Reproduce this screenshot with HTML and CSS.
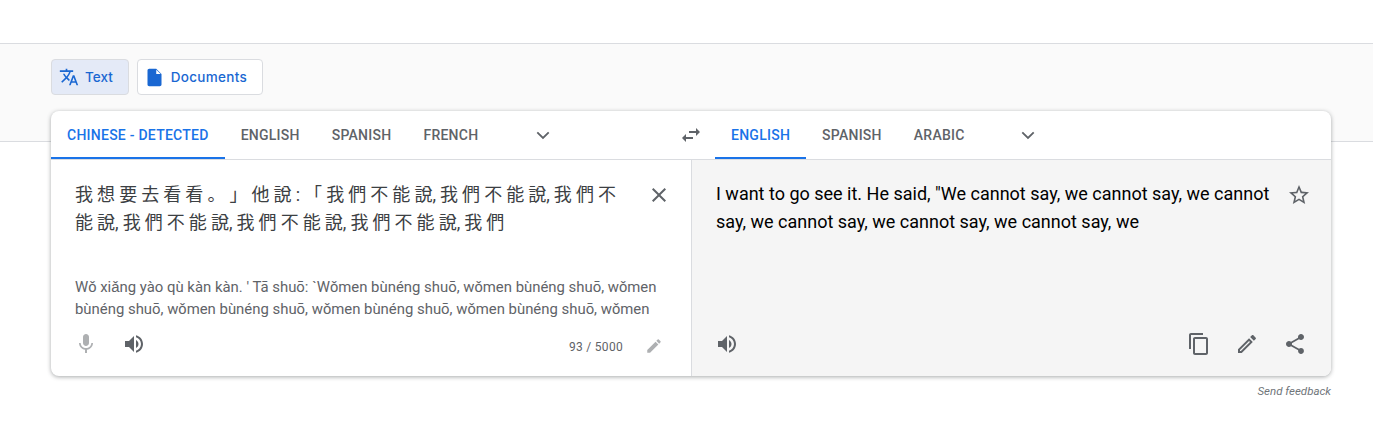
FILE: index.html
```html
<!DOCTYPE html>
<html lang="en">
<head>
  <meta charset="UTF-8" />
  <title>Google Translate</title>
  <link rel="stylesheet" href="styles.css">
</head>
<body>
  <svg class="defs" width="0" height="0">
    <symbol id="i-chevron" viewBox="0 0 24 24"><path d="M6.3 9.3L12 15l5.7-5.7" fill="none" stroke="#5f6368" stroke-width="1.8"/></symbol>
    <symbol id="i-volume" viewBox="0 0 24 24"><path d="M3 9v6h4l5 5V4L7 9H3zm13.5 3c0-1.77-1.02-3.29-2.5-4.03v8.05c1.48-.73 2.5-2.25 2.5-4.02zM14 3.23v2.06c2.89.86 5 3.54 5 6.71s-2.11 5.85-5 6.71v2.06c4.01-.91 7-4.49 7-8.77s-2.99-7.86-7-8.77z"/></symbol>
  </svg>

  <!-- top bar -->
  <header class="topbar"></header>

  <!-- mode buttons -->
  <div class="band">
    <button class="mode mode-active">
      <svg class="mode-icon" viewBox="0 0 24 24"><path d="M12.87 15.07l-2.54-2.51.03-.03c1.74-1.94 2.98-4.17 3.71-6.53H17V4h-7V2H8v2H1v1.99h11.17C11.5 7.92 10.44 9.75 9 11.35 8.07 10.32 7.3 9.19 6.69 8h-2c.73 1.63 1.73 3.17 2.98 4.56l-5.09 5.02L4 19l5-5 3.11 3.11.76-2.04zM18.5 10h-2L12 22h2l1.12-3h4.75L21 22h2l-4.5-12zm-2.62 7l1.62-4.33L19.12 17h-3.24z"/></svg>
      Text
    </button>
    <button class="mode mode-docs">
      <svg class="mode-icon doc-icon" viewBox="0 0 24 24"><path d="M6 2c-1.1 0-2 .9-2 2v16c0 1.1.9 2 2 2h12c1.1 0 2-.9 2-2V8l-6-6H6zm8 1v5h5z" fill-rule="evenodd"/></svg>
      Documents
    </button>
  </div>

  <!-- translator card -->
  <main class="card">
    <div class="lang-row">
      <div class="lang-bar lang-bar-src">
        <span class="tab tab-active">Chinese - detected</span>
        <span class="tab">English</span>
        <span class="tab">Spanish</span>
        <span class="tab">French</span>
        <svg class="chevron"><use href="#i-chevron"/></svg>
      </div>
      <div class="swap">
        <svg class="icon" viewBox="0 0 24 24"><path d="M6.99 11L3 15l3.99 4v-3H14v-2H6.99v-3zM21 9l-3.99-4v3H10v2h7.01v3L21 9z"/></svg>
      </div>
      <div class="lang-bar lang-bar-out">
        <span class="tab tab-active">English</span>
        <span class="tab">Spanish</span>
        <span class="tab">Arabic</span>
        <svg class="chevron"><use href="#i-chevron"/></svg>
      </div>
    </div>

    <div class="panels">
      <section class="panel panel-src">
        <div class="text-row">
          <p class="src-text">我 想 要 去 看 看 。 」 他 說 : 「 我 們 不 能 說, 我 們 不 能 說, 我 們 不 能 說, 我 們 不 能 說, 我 們 不 能 說, 我 們 不 能 說, 我 們</p>
          <svg class="icon close" viewBox="0 0 24 24"><path d="M19 6.41L17.59 5 12 10.59 6.41 5 5 6.41 10.59 12 5 17.59 6.41 19 12 13.41 17.59 19 19 17.59 13.41 12z"/></svg>
        </div>
        <p class="roman">Wǒ xiǎng yào qù kàn kàn. ' Tā shuō: `Wǒmen bùnéng shuō, wǒmen bùnéng shuō, wǒmen bùnéng shuō, wǒmen bùnéng shuō, wǒmen bùnéng shuō, wǒmen bùnéng shuō, wǒmen</p>
        <div class="tools">
          <svg class="icon faded" viewBox="0 0 24 24"><path d="M12 14c1.66 0 3-1.34 3-3V5c0-1.66-1.34-3-3-3S9 3.34 9 5v6c0 1.66 1.34 3 3 3zm5.3-3c0 3-2.54 5.1-5.3 5.1S6.7 14 6.7 11H5c0 3.41 2.72 6.23 6 6.72V21h2v-3.28c3.28-.48 6-3.3 6-6.72h-1.7z"/></svg>
          <svg class="icon"><use href="#i-volume"/></svg>
          <span class="count">93 / 5000</span>
          <svg class="icon-sm faded" viewBox="0 0 24 24"><path d="M3 17.25V21h3.75L17.81 9.94l-3.75-3.75L3 17.25zM20.71 7.04c.39-.39.39-1.02 0-1.41l-2.34-2.34c-.39-.39-1.02-.39-1.41 0l-1.83 1.83 3.75 3.75 1.83-1.83z"/></svg>
        </div>
      </section>

      <section class="panel panel-out">
        <div class="text-row text-row-out">
          <p class="out-text">I want to go see it. He said, "We cannot say, we cannot say, we cannot say, we cannot say, we cannot say, we cannot say, we</p>
          <svg class="icon star" viewBox="0 0 24 24"><path d="M22 9.24l-7.19-.62L12 2 9.19 8.63 2 9.24l5.46 4.73L5.82 21 12 17.27 18.18 21l-1.63-7.03L22 9.24zM12 15.4l-3.76 2.27 1-4.28-3.32-2.88 4.38-.38L12 6.1l1.71 4.04 4.38.38-3.32 2.88 1 4.28L12 15.4z"/></svg>
        </div>
        <div class="tools tools-out">
          <svg class="icon"><use href="#i-volume"/></svg>
          <svg class="icon push" viewBox="0 0 24 24"><path d="M16 1H4c-1.1 0-2 .9-2 2v14h2V3h12V1zm3 4H8c-1.1 0-2 .9-2 2v14c0 1.1.9 2 2 2h11c1.1 0 2-.9 2-2V7c0-1.1-.9-2-2-2zm0 16H8V7h11v14z"/></svg>
          <svg class="icon" viewBox="0 0 24 24"><path d="M14.06 9.02l.92.92L5.92 19H5v-.92l9.06-9.06M17.66 3c-.25 0-.51.1-.7.29l-1.83 1.83 3.75 3.75 1.83-1.83c.39-.39.39-1.02 0-1.41l-2.34-2.34c-.2-.2-.45-.29-.71-.29zm-3.6 3.19L3 17.25V21h3.75L17.81 9.94l-3.75-3.75z"/></svg>
          <svg class="icon" viewBox="0 0 24 24"><path d="M18 16.08c-.76 0-1.44.3-1.96.77L8.91 12.7c.05-.23.09-.46.09-.7s-.04-.47-.09-.7l7.05-4.11c.54.5 1.25.81 2.04.81 1.66 0 3-1.34 3-3s-1.34-3-3-3-3 1.34-3 3c0 .24.04.47.09.7L8.04 9.81C7.5 9.31 6.79 9 6 9c-1.66 0-3 1.34-3 3s1.34 3 3 3c.79 0 1.5-.31 2.04-.81l7.12 4.16c-.05.21-.08.43-.08.65 0 1.61 1.31 2.92 2.92 2.92 1.61 0 2.92-1.31 2.92-2.92s-1.31-2.92-2.92-2.92z"/></svg>
        </div>
      </section>
    </div>
  </main>

  <div class="feedback">Send feedback</div>
</body>
</html>
```

FILE: styles.css
```css
*{margin:0;padding:0;box-sizing:border-box;}

body{
  background:#fff;
  font-family:Roboto,Arial,sans-serif;
  color:#3c4043;
}
.defs{display:block;height:0;}

/* top + grey band */
.topbar{height:43px;}
.band{
  height:99px;
  padding:15px 51px 0;
  display:flex;
  align-items:flex-start;
  gap:8px;
  background:#fafafa;
  border-top:1px solid #dadce0;
  border-bottom:1px solid #dadce0;
}
.mode{
  height:36px;
  padding:0 15px 0 7px;
  display:flex;
  align-items:center;
  gap:6px;
  border:1px solid #dadce0;
  border-radius:4px;
  background:#fff;
  color:#1967d2;
  font-family:Inter,Roboto,sans-serif;
  font-size:13.5px;
  font-weight:500;
}
.mode-active{background:#e4eaf7;}
.mode-docs{padding:0 15px 0 6px;letter-spacing:.3px;}
.mode-icon{width:20px;height:20px;fill:#1967d2;}
.doc-icon{width:21px;height:21px;}

/* card */
.card{
  width:1280px;
  height:265px;
  margin:-31px 0 0 51px;
  display:flex;
  flex-direction:column;
  background:#fff;
  border-radius:8px;
  box-shadow:0 1px 4px rgba(60,64,67,.45);
  overflow:hidden;
}
.lang-row{
  height:49px;
  display:flex;
  flex:none;
  border-bottom:1px solid #dadce0;
}
.lang-bar{display:flex;align-items:stretch;flex:1;}
.lang-bar-src{flex:none;width:616px;}
.tab{
  height:48px;
  padding:2px 16px 0;
  display:flex;
  align-items:center;
  font-size:14px;
  font-weight:500;
  letter-spacing:.25px;
  text-transform:uppercase;
  color:#5f6368;
  border-bottom:2px solid transparent;
}
.tab-active{color:#1a73e8;border-bottom-color:#1a73e8;}
.chevron{width:24px;height:24px;margin:12px 0 0 37px;}
.lang-bar-out .chevron{margin-left:35px;}
.swap{
  width:48px;
  flex:none;
  display:flex;
  align-items:center;
  justify-content:center;
}

.icon{width:24px;height:24px;flex:none;fill:#5f6368;}
.icon-sm{width:18px;height:18px;flex:none;fill:#5f6368;margin-top:4px;}
.faded{opacity:.5;}

/* panels */
.panels{flex:1;display:flex;min-height:0;}
.panel{display:flex;flex-direction:column;}
.panel-src{width:640px;flex:none;}
.panel-out{flex:1;background:#f5f5f5;border-left:1px solid #dadce0;}

.text-row{
  height:116px;
  flex:none;
  padding:21px 20px 0 24px;
  display:flex;
  justify-content:space-between;
}
.text-row-out{flex:1;padding-top:20px;}
.src-text{
  width:548px;
  font-family:Roboto,"Noto Sans CJK JP",sans-serif;
  font-size:18px;
  line-height:28px;
  word-spacing:-.4px;
  color:#3c4043;
}
.close{margin-top:2px;}
.out-text{
  width:560px;
  font-size:18px;
  line-height:28px;
  color:#000;
}
.star{margin-top:3px;}

.roman{
  height:44px;
  padding:0 24px;
  font-size:14.9px;
  line-height:22px;
  color:#5f6368;
}

.tools{
  flex:1;
  padding:0 28px 8px 23px;
  display:flex;
  align-items:center;
  gap:24px;
}
.count{margin:6px -2px 0 auto;font-size:12px;letter-spacing:.3px;color:#5f6368;}
.tools-out{flex:none;height:64px;padding:0 24px 0 23px;}
.push{margin-left:auto;}

.feedback{
  width:1280px;
  margin:8px 0 0 51px;
  text-align:right;
  font-size:11.5px;
  font-style:italic;
  color:#70757a;
}
```
